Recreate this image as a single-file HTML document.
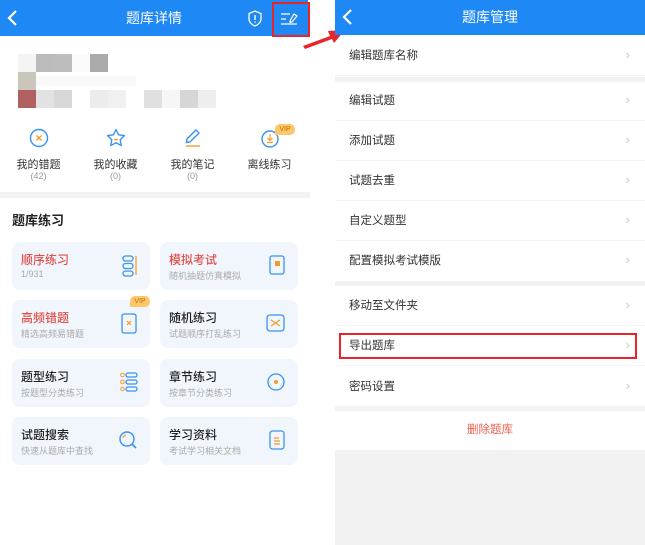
<!DOCTYPE html>
<html><head><meta charset="utf-8"><style>
*{margin:0;padding:0;box-sizing:border-box}
body{width:645px;height:545px;background:#fff;position:relative;overflow:hidden;font-family:"Liberation Sans","Noto Sans CJK SC",sans-serif}
.a{position:absolute}
.hdr{background:#1e88f5;color:#fff;font-size:14px;text-align:center}
.px{position:absolute;width:18px;height:18px}
.ic{position:absolute;top:128px;width:77px;text-align:center}
.ic .l{position:absolute;top:28px;width:77px;font-size:11px;color:#333}
.ic .c{position:absolute;top:43px;width:77px;font-size:9px;color:#999}
.card{position:absolute;width:138px;height:48px;background:#f1f6fd;border-radius:8px}
.card .t{position:absolute;left:9px;top:9px;font-size:12px;color:#222;font-weight:500}
.card .s{position:absolute;left:9px;top:27px;font-size:9px;color:#aaa}
.card svg{position:absolute;right:12px;top:13px}
.row{position:absolute;left:335px;width:310px;height:40px;border-bottom:1px solid #f4f4f4;font-size:11.5px;color:#333;line-height:40px;padding-left:14px}
.row:after{content:"›";position:absolute;right:15px;top:-1px;color:#c8c8c8;font-size:13px}
.sep{position:absolute;left:335px;width:310px;background:#f2f2f2}
</style></head><body>
<div class="a hdr" style="left:0;top:0;width:308px;height:36px;line-height:36px">题库详情</div>
<svg class="a" style="left:6px;top:9px" width="14" height="18"><path d="M10 2 L3 9 L10 16" stroke="#fff" stroke-width="2.2" fill="none"/></svg>
<svg class="a" style="left:247px;top:10px" width="16" height="17"><path d="M8 1 L14 3.5 V9 C14 12 11 15 8 16 C5 15 2 12 2 9 V3.5Z" stroke="#fff" stroke-width="1.3" fill="none"/><path d="M8 5v5M8 11.5v1.3" stroke="#fff" stroke-width="1.4"/></svg>
<svg class="a" style="left:279px;top:10px" width="22" height="18"><path d="M2 4h9M2 9h5M2 14h16" stroke="#fff" stroke-width="1.3"/><path d="M15 4 L18 6 L13 12 L11 12.5 L11.5 10Z" stroke="#fff" stroke-width="1.2" fill="none"/></svg>
<div class="a" style="left:272px;top:2px;width:38px;height:35px;border:2px solid #e8262a"></div>
<div class="px" style="left:18px;top:54px;background:#f4f4f4"></div><div class="px" style="left:36px;top:54px;background:#bcbcbc"></div><div class="px" style="left:54px;top:54px;background:#bdbdbd"></div><div class="px" style="left:72px;top:54px;background:#fafafa"></div><div class="px" style="left:90px;top:54px;background:#aaa"></div>
<div class="px" style="left:18px;top:72px;background:#cbc6bc"></div><div class="a" style="left:36px;top:76px;width:100px;height:10px;background:#f9f9f9"></div>
<div class="px" style="left:18px;top:90px;background:#b06060"></div><div class="px" style="left:36px;top:90px;background:#e2e2e2"></div><div class="px" style="left:54px;top:90px;background:#d8d8d8"></div><div class="px" style="left:90px;top:90px;background:#ececec"></div><div class="px" style="left:108px;top:90px;background:#f0f0f0"></div><div class="px" style="left:144px;top:90px;background:#e0e0e0"></div><div class="px" style="left:162px;top:90px;background:#f6f6f6"></div><div class="px" style="left:180px;top:90px;background:#d6d6d6"></div><div class="px" style="left:198px;top:90px;background:#eee"></div>
<div class="ic" style="left:0"><svg width="20" height="20"><circle cx="10" cy="10" r="8.5" stroke="#3a92f0" stroke-width="1.4" fill="none"/><path d="M7.5 7.5l5 5M12.5 7.5l-5 5" stroke="#f39a2b" stroke-width="1.3"/></svg><div class="l">我的错题</div><div class="c">(42)</div></div>
<div class="ic" style="left:77px"><svg width="20" height="20"><path d="M10 1.5l2.6 5.3 5.8.8-4.2 4.1 1 5.8L10 14.8l-5.2 2.7 1-5.8-4.2-4.1 5.8-.8z" stroke="#3a92f0" stroke-width="1.4" fill="none" stroke-linejoin="round"/><path d="M8 11q2 1.5 4 0" stroke="#f39a2b" stroke-width="1.2" fill="none"/></svg><div class="l">我的收藏</div><div class="c">(0)</div></div>
<div class="ic" style="left:154px"><svg width="20" height="20"><path d="M13 2l3 3-9 9-3.5.5.5-3.5z" stroke="#3a92f0" stroke-width="1.4" fill="none"/><path d="M3 18h14" stroke="#f39a2b" stroke-width="1.4"/></svg><div class="l">我的笔记</div><div class="c">(0)</div></div>
<div class="ic" style="left:231px"><svg width="20" height="20"><circle cx="10" cy="11" r="8" stroke="#3a92f0" stroke-width="1.4" fill="none"/><path d="M10 6v6M7.5 10l2.5 2.5 2.5-2.5M7 14.5h6" stroke="#f39a2b" stroke-width="1.2" fill="none"/></svg><div class="l">离线练习</div><div class="a" style="left:44px;top:-4px;width:20px;height:11px;background:#fcc86a;border-radius:5px 5px 5px 1px;font-size:7px;color:#c76b00;line-height:11px">VIP</div></div>
<div class="a" style="left:0;top:192px;width:310px;height:6px;background:#f2f2f2"></div>
<div class="a" style="left:12px;top:210px;font-size:13px;color:#222;font-weight:bold">题库练习</div>
<div class="card" style="left:12px;top:242px"><div class="t" style="color:#e0504a">顺序练习</div><div class="s">1/931</div><svg width="16" height="22"><rect x="1" y="1" width="10" height="5" rx="2.5" stroke="#3a92f0" fill="none" stroke-width="1.3"/><rect x="1" y="8.5" width="10" height="5" rx="2.5" stroke="#3a92f0" fill="none" stroke-width="1.3"/><rect x="1" y="16" width="10" height="5" rx="2.5" stroke="#3a92f0" fill="none" stroke-width="1.3"/><path d="M14 1v19" stroke="#f39a2b" stroke-width="1.3"/></svg></div>
<div class="card" style="left:160px;top:242px"><div class="t" style="color:#e0504a">模拟考试</div><div class="s">随机抽题仿真模拟</div><svg width="18" height="22"><rect x="2" y="1" width="14" height="18" rx="2" stroke="#3a92f0" fill="none" stroke-width="1.3"/><rect x="7" y="6" width="5" height="5" fill="#f39a2b"/></svg></div>
<div class="card" style="left:12px;top:300px"><div class="t" style="color:#e0504a">高频错题</div><div class="s">精选高频易错题</div><svg width="18" height="22"><rect x="2" y="1" width="14" height="19" rx="2" stroke="#3a92f0" fill="none" stroke-width="1.3"/><path d="M7 8l4 4M11 8l-4 4" stroke="#f39a2b" stroke-width="1.2"/></svg><div class="a" style="left:118px;top:-4px;width:20px;height:11px;background:#fcc86a;border-radius:5px 5px 5px 1px;font-size:7px;color:#c76b00;line-height:11px;text-align:center">VIP</div></div>
<div class="card" style="left:160px;top:300px"><div class="t">随机练习</div><div class="s">试题顺序打乱练习</div><svg width="20" height="20"><rect x="1" y="2" width="17" height="16" rx="3" stroke="#3a92f0" fill="none" stroke-width="1.3"/><path d="M5 7l9 6M5 13l9-6" stroke="#f39a2b" stroke-width="1.2"/></svg></div>
<div class="card" style="left:12px;top:359px"><div class="t">题型练习</div><div class="s">按题型分类练习</div><svg width="18" height="20"><circle cx="2.5" cy="3" r="1.8" stroke="#f39a2b" fill="none"/><circle cx="2.5" cy="10" r="1.8" stroke="#f39a2b" fill="none"/><circle cx="2.5" cy="17" r="1.8" stroke="#f39a2b" fill="none"/><rect x="6" y="1" width="11" height="4" rx="2" stroke="#3a92f0" fill="none" stroke-width="1.3"/><rect x="6" y="8" width="11" height="4" rx="2" stroke="#3a92f0" fill="none" stroke-width="1.3"/><rect x="6" y="15" width="11" height="4" rx="2" stroke="#3a92f0" fill="none" stroke-width="1.3"/></svg></div>
<div class="card" style="left:160px;top:359px"><div class="t">章节练习</div><div class="s">按章节分类练习</div><svg width="20" height="20"><circle cx="10" cy="10" r="8" stroke="#3a92f0" fill="none" stroke-width="1.3"/><circle cx="10" cy="10" r="2" fill="#f39a2b"/></svg></div>
<div class="card" style="left:12px;top:417px"><div class="t">试题搜索</div><div class="s">快速从题库中查找</div><svg width="20" height="20"><circle cx="9" cy="9" r="7" stroke="#3a92f0" fill="none" stroke-width="1.4"/><path d="M14 14l4 4" stroke="#3a92f0" stroke-width="1.6"/><path d="M5 8a4 4 0 0 1 3-3" stroke="#f39a2b" stroke-width="1.2" fill="none"/></svg></div>
<div class="card" style="left:160px;top:417px"><div class="t">学习资料</div><div class="s">考试学习相关文档</div><svg width="18" height="20"><rect x="2" y="1" width="14" height="18" rx="2.5" stroke="#3a92f0" fill="none" stroke-width="1.3"/><path d="M6 8h5M6 11h6M6 14h6" stroke="#f39a2b" stroke-width="1.2"/></svg></div>
<svg class="a" style="left:300px;top:22px" width="48" height="30"><path d="M3 24 L30 14 L28 9 L45 8 L34 21 L32 17 L5 27Z" fill="#e8262a"/></svg>
<div class="a hdr" style="left:335px;top:0;width:310px;height:35px;line-height:35px">题库管理</div>
<svg class="a" style="left:341px;top:8px" width="14" height="18"><path d="M10 2 L3 9 L10 16" stroke="#fff" stroke-width="2.2" fill="none"/></svg>
<div class="row" style="top:36px">编辑题库名称</div>
<div class="sep" style="top:77px;height:5px"></div>
<div class="row" style="top:81px">编辑试题</div>
<div class="row" style="top:121px">添加试题</div>
<div class="row" style="top:161px">试题去重</div>
<div class="row" style="top:201px">自定义题型</div>
<div class="row" style="top:241px;border:none">配置模拟考试模版</div>
<div class="sep" style="top:281px;height:5px"></div>
<div class="row" style="top:286px">移动至文件夹</div>
<div class="row" style="top:326px">导出题库</div>
<div class="a" style="left:339px;top:333px;width:298px;height:26px;border:2px solid #e8262a"></div>
<div class="row" style="top:367px;border:none">密码设置</div>
<div class="sep" style="top:406px;height:5px"></div>
<div class="a" style="left:335px;top:411px;width:310px;height:39px;text-align:center;line-height:39px;font-size:11.5px;color:#e8604f">删除题库</div>
<div class="sep" style="top:450px;height:95px"></div>
</body></html>
